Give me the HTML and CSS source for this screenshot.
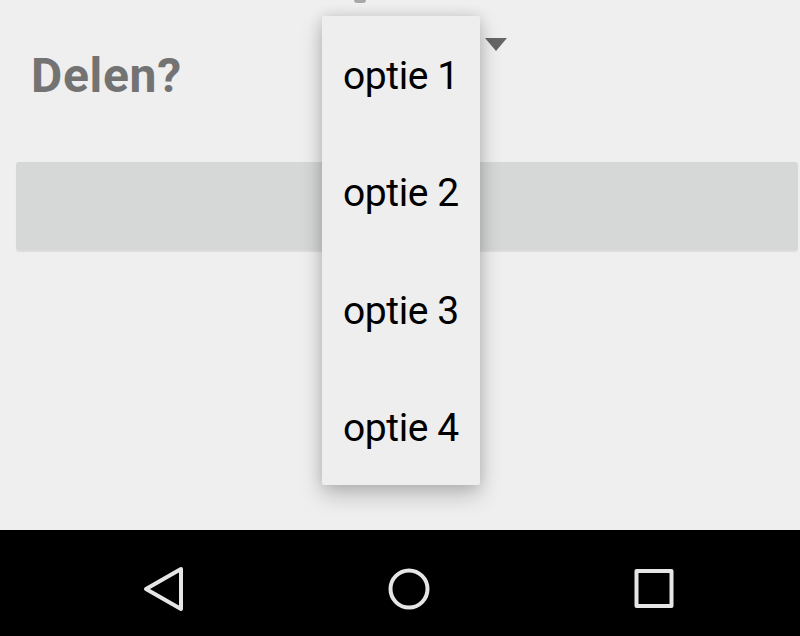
FILE: index.html
```html
<!DOCTYPE html>
<html>
<head>
<meta charset="utf-8">
<link rel="stylesheet" href="styles.css">
</head>
<body>
<div class="screen">
  <div class="content">
    <div class="peek"></div>
    <div class="row">
      <div class="label">Delen?</div>
      <div class="arrow"></div>
    </div>
    <div class="button"></div>
    <div class="menu">
      <div class="item">optie 1</div>
      <div class="item">optie 2</div>
      <div class="item">optie 3</div>
      <div class="item">optie 4</div>
    </div>
  </div>
  <div class="nav">
    <svg class="navicon" width="48" height="48" viewBox="0 0 48 48"><polygon points="7,24 42,4 42,44" fill="none" stroke="#e6e6e6" stroke-width="4" stroke-linejoin="round"/></svg>
    <svg class="navicon home" width="48" height="48" viewBox="0 0 48 48"><circle cx="24" cy="24" r="18.5" fill="none" stroke="#e6e6e6" stroke-width="4"/></svg>
    <svg class="navicon recent" width="48" height="48" viewBox="0 0 48 48"><rect x="6.5" y="6" width="35" height="35" fill="none" stroke="#e6e6e6" stroke-width="4" stroke-linejoin="round"/></svg>
  </div>
</div>
</body>
</html>
```
FILE: styles.css
```css
html, body {
  margin: 0;
  padding: 0;
}
body {
  width: 800px;
  height: 636px;
  overflow: hidden;
  background: #eeeeee;
  font-family: Roboto, "Noto Sans", sans-serif;
}
.screen {
  display: flex;
  flex-direction: column;
  height: 636px;
}
.content {
  position: relative;
  flex: 1;
  background: #efefef;
}
.peek {
  position: absolute;
  left: 354px;
  top: 0;
  width: 12px;
  height: 3px;
  border-radius: 0 0 6px 6px;
  background: #a8a8a8;
}
.row {
  display: flex;
  align-items: flex-start;
  padding: 38px 293px 0 31px;
}
.label {
  margin-top: 10px;
  font-size: 48px;
  line-height: 56px;
  font-weight: 700;
  letter-spacing: 0.7px;
  color: #737373;
}
.arrow {
  margin-left: auto;
  width: 0;
  height: 0;
  border-left: 11.5px solid transparent;
  border-right: 11.5px solid transparent;
  border-top: 13px solid #666666;
}
.button {
  margin: 58px 2px 0 16px;
  height: 88px;
  border-radius: 3px;
  background: #d6d7d7;
  box-shadow: 0 2px 1px rgba(0, 0, 0, 0.08);
}
.menu {
  position: absolute;
  left: 322px;
  top: 16px;
  width: 158px;
  height: 469px;
  display: flex;
  flex-direction: column;
  background: #eeeeee;
  border-radius: 2px;
  box-shadow: 0 10px 22px rgba(0, 0, 0, 0.22), 0 0 14px rgba(0, 0, 0, 0.12);
}
.item {
  flex: 1;
  display: flex;
  align-items: center;
  padding: 3px 0 0 21px;
  font-size: 39px;
  letter-spacing: -0.4px;
  color: #000000;
}
.nav {
  height: 106px;
  background: #000000;
  display: flex;
  align-items: flex-start;
  padding: 35px 0 0 139px;
  box-sizing: border-box;
}
.home {
  margin-left: 198px;
}
.recent {
  margin-left: 197px;
}
```
